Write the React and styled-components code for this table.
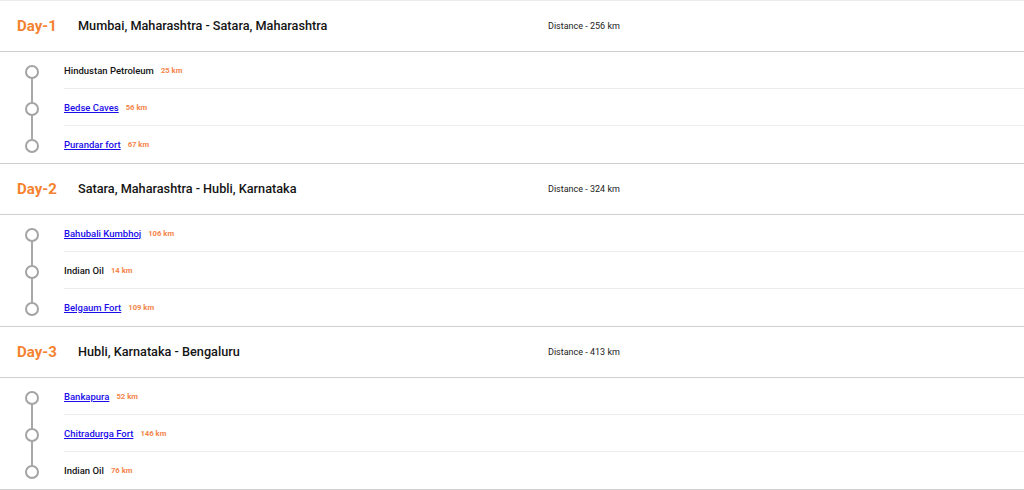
import React from 'react';
import styled, { createGlobalStyle } from 'styled-components';

const days = [
    {
        day: 'Day-1',
        route: 'Mumbai, Maharashtra - Satara, Maharashtra',
        distance: '256 km',
        stops: [
            { name: 'Hindustan Petroleum', km: '25 km', link: false },
            { name: 'Bedse Caves', km: '56 km', link: true },
            { name: 'Purandar fort', km: '67 km', link: true },
        ],
    },
    {
        day: 'Day-2',
        route: 'Satara, Maharashtra - Hubli, Karnataka',
        distance: '324 km',
        stops: [
            { name: 'Bahubali Kumbhoj', km: '106 km', link: true },
            { name: 'Indian Oil', km: '14 km', link: false },
            { name: 'Belgaum Fort', km: '109 km', link: true },
        ],
    },
    {
        day: 'Day-3',
        route: 'Hubli, Karnataka - Bengaluru',
        distance: '413 km',
        stops: [
            { name: 'Bankapura', km: '52 km', link: true },
            { name: 'Chitradurga Fort', km: '146 km', link: true },
            { name: 'Indian Oil', km: '76 km', link: false },
        ],
    },
];

const App = () => {
    return (
        <>
            <GlobalStyle />
            <Itinerary>
                {days.map((d) => (
                    <DayBlock key={d.day}>
                        <DayHeader>
                            <DayLabel>{d.day}</DayLabel>
                            <Route>{d.route}</Route>
                            <Distance>Distance - {d.distance}</Distance>
                        </DayHeader>
                        {d.stops.map((s, i) => (
                            <StopRow key={s.name + i}>
                                <Marker>
                                    <Segment $hidden={i === 0} $h={13} />
                                    <Dot />
                                    <Segment
                                        $hidden={i === d.stops.length - 1}
                                        $grow
                                    />
                                </Marker>
                                <StopBody $last={i === d.stops.length - 1}>
                                    {s.link ? (
                                        <StopLink href='#'>{s.name}</StopLink>
                                    ) : (
                                        <StopName>{s.name}</StopName>
                                    )}
                                    <Km>{s.km}</Km>
                                </StopBody>
                            </StopRow>
                        ))}
                    </DayBlock>
                ))}
            </Itinerary>
        </>
    );
};

export default App;

const GlobalStyle = createGlobalStyle`
    body {
        margin: 0;
        background: #fff;
        font-family: Roboto, 'Liberation Sans', sans-serif;
        color: #1d1d1d;
    }
`;

const Itinerary = styled.div`
    width: 1024px;
    border-top: 1px solid #ececec;
`;

const DayBlock = styled.section`
    border-bottom: 1px solid #cfcfcf;
`;

const DayHeader = styled.div`
    display: grid;
    grid-template-columns: 61px 470px 1fr;
    align-items: center;
    height: 50px;
    padding-left: 17px;
    padding-bottom: 1px;
    box-sizing: border-box;
    border-bottom: 1px solid #cfcfcf;
    height: 51px;
`;

const DayLabel = styled.span`
    font-size: 15px;
    font-weight: 700;
    color: #f5822f;
`;

const Route = styled.span`
    font-size: 12.7px;
    font-weight: 500;
    color: #141414;
`;

const Distance = styled.span`
    font-size: 9px;
    color: #222;
`;

const StopRow = styled.div`
    display: flex;
    height: 37px;
`;

const Marker = styled.div`
    width: 64px;
    flex: none;
    display: flex;
    flex-direction: column;
    align-items: center;
    padding-right: 1px;
    box-sizing: border-box;
`;

const Segment = styled.div`
    width: 2px;
    background: ${(p) => (p.$hidden ? 'transparent' : '#a8a8a8')};
    height: ${(p) => (p.$h ? `${p.$h}px` : 'auto')};
    flex: ${(p) => (p.$grow ? 1 : 'none')};
`;

const Dot = styled.div`
    width: 14px;
    height: 14px;
    box-sizing: border-box;
    border: 2px solid #a4a4a4;
    border-radius: 50%;
    background: #fff;
    flex: none;
`;

const StopBody = styled.div`
    flex: 1;
    display: flex;
    align-items: center;
    gap: 7px;
    padding-bottom: ${(p) => (p.$last ? '1px' : '0')};
    box-sizing: border-box;
    border-bottom: ${(p) => (p.$last ? 'none' : '1px solid #ececec')};
`;

const StopName = styled.span`
    font-size: 9.5px;
    font-weight: 500;
    color: #141414;
`;

const StopLink = styled.a`
    font-size: 9.5px;
    font-weight: 500;
    color: #1a0dea;
    text-decoration: underline;
`;

const Km = styled.span`
    font-size: 7.7px;
    font-weight: 700;
    color: #f5854a;
`;
